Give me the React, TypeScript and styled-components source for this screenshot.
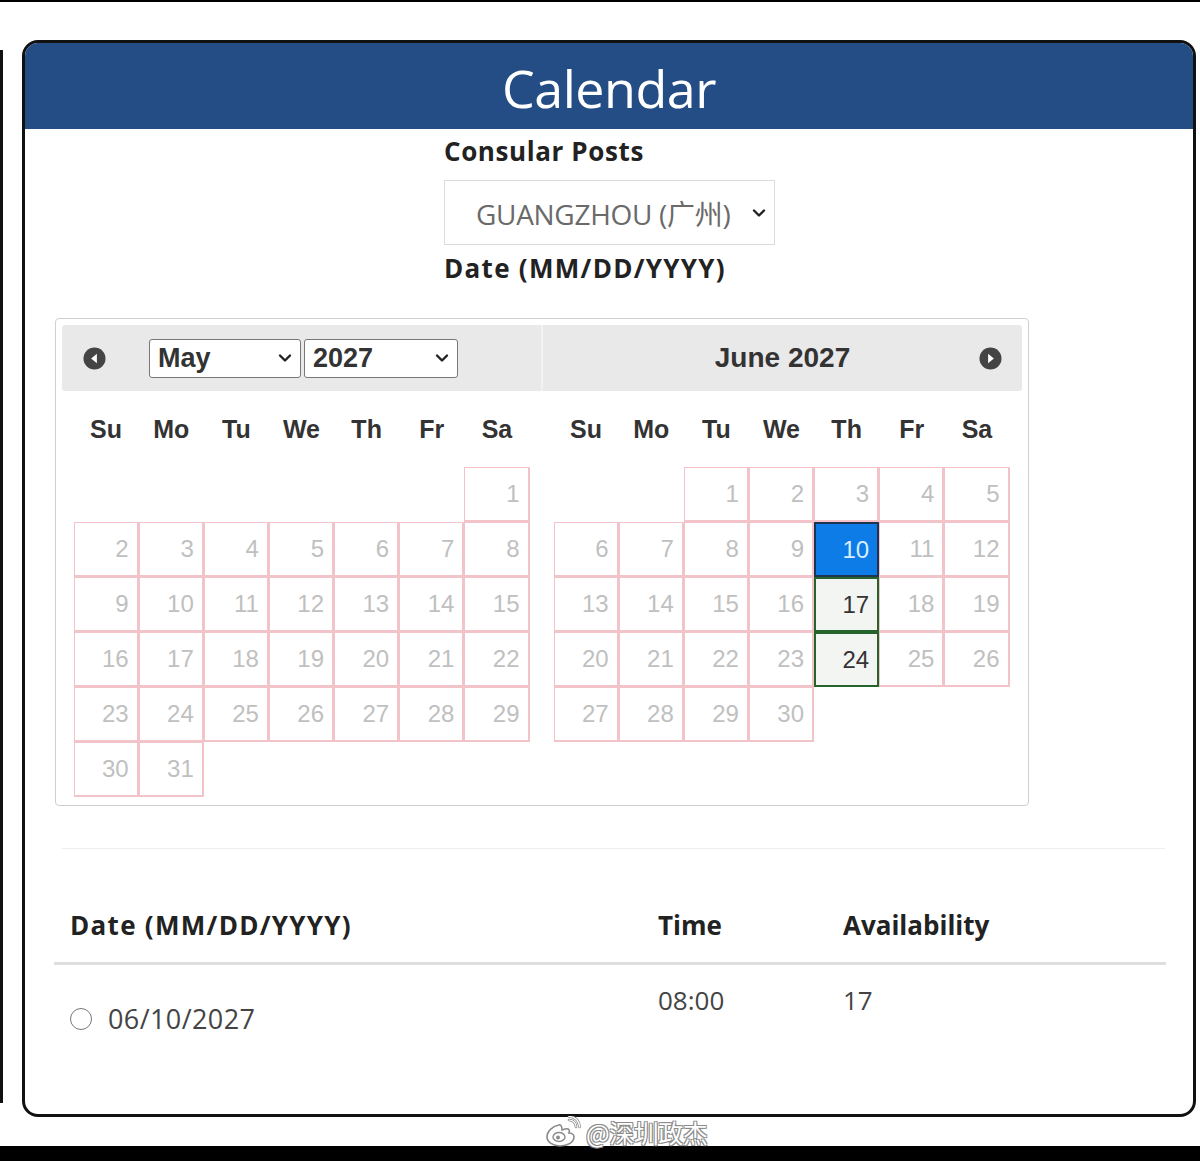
import React from 'react';
import styled, { createGlobalStyle } from 'styled-components';

const GlobalStyle = createGlobalStyle`
  html, body {
    margin: 0;
    padding: 0;
    background: #fff;
  }
  * {
    box-sizing: border-box;
  }
`;

const UI_FONT = `'Open Sans', 'Noto Sans', 'Noto Sans CJK SC', sans-serif`;
const CAL_FONT = `'Liberation Sans', Arial, sans-serif`;

const Page = styled.div`
  position: relative;
  width: 1200px;
  height: 1161px;
  overflow: hidden;
  border-top: 2px solid #000;
  display: flex;
  flex-direction: column;
`;

const Stage = styled.div`
  display: flex;
  align-items: flex-start;
  padding-top: 38px;
`;

const LeftEdge = styled.div`
  width: 3px;
  height: 1053px;
  margin-top: 10px;
  background: #111;
`;

const Card = styled.section`
  width: 1174px;
  height: 1077px;
  margin-left: 19px;
  border: 3px solid #111;
  border-radius: 16px;
  overflow: hidden;
  display: flex;
  flex-direction: column;
  background: #fff;
`;

const CardHeader = styled.header`
  height: 86px;
  background: #234d84;
  display: flex;
  align-items: center;
  justify-content: center;
`;

const Title = styled.h1`
  margin: 0;
  font-family: ${UI_FONT};
  font-size: 52px;
  font-weight: 400;
  color: #fff;
  letter-spacing: -0.5px;
  padding-top: 2px;
`;

const Body = styled.div`
  padding: 7px 0 0 0;
  display: flex;
  flex-direction: column;
`;

const Form = styled.div`
  margin-left: 419px;
  display: flex;
  flex-direction: column;
`;

const Label = styled.div<{ $mt?: number; $ls?: number }>`
  font-family: ${UI_FONT};
  font-size: 26px;
  font-weight: 700;
  line-height: 30px;
  color: #222;
  letter-spacing: ${({ $ls }) => $ls ?? 0}px;
  margin-top: ${({ $mt }) => $mt ?? 0}px;
`;

const PostSelect = styled.div`
  margin-top: 14px;
  width: 331px;
  height: 65px;
  border: 1px solid #dcdcdc;
  display: flex;
  align-items: center;
  justify-content: space-between;
  padding: 0 8px 0 31px;
  font-family: ${UI_FONT};
  font-size: 28px;
  letter-spacing: -0.3px;
  color: #6a6a6a;
`;

const Picker = styled.div`
  margin: 35px 0 0 30px;
  width: 974px;
  height: 488px;
  border: 1px solid #cfcfcf;
  border-radius: 4px;
  padding: 6px;
  display: grid;
  grid-template-columns: 479px 481px;
  align-content: start;
`;

const Month = styled.div`
  display: flex;
  flex-direction: column;
`;

const MonthHeader = styled.div<{ $side: 'left' | 'right' }>`
  height: 66px;
  background: #e9e9e9;
  display: grid;
  align-items: center;
  border-radius: ${({ $side }) => ($side === 'left' ? '3px 0 0 3px' : '0 3px 3px 0')};
  ${({ $side }) =>
    $side === 'left'
      ? `grid-template-columns: auto auto auto 1fr; padding-left: 21px;`
      : `grid-template-columns: 1fr auto 1fr; padding-right: 20px; border-left: 2px solid #f2f2f2;`}
`;

const NavButton = styled.span<{ $end?: boolean }>`
  display: flex;
  justify-self: ${({ $end }) => ($end ? 'end' : 'start')};
  margin-right: ${({ $end }) => ($end ? 0 : 43)}px;
`;

const DropBox = styled.div<{ $w: number; $gap?: number }>`
  width: ${({ $w }) => $w}px;
  height: 39px;
  margin-left: ${({ $gap }) => $gap ?? 0}px;
  border: 1px solid #777;
  border-radius: 3px;
  background: #fff;
  display: flex;
  align-items: center;
  justify-content: space-between;
  padding: 0 8px 0 8px;
  font-family: ${CAL_FONT};
  font-size: 27px;
  font-weight: 700;
  color: #333;
`;

const MonthTitle = styled.div`
  grid-column: 2;
  font-family: ${CAL_FONT};
  font-size: 28px;
  font-weight: 700;
  color: #333;
  padding-left: 20px;
`;

const Grid = styled.div`
  margin: 0 auto;
  width: 456px;
  display: grid;
  grid-template-columns: repeat(7, 1fr);
  grid-template-rows: 76px;
  grid-auto-rows: 55px;
`;

const WeekDay = styled.div`
  display: flex;
  align-items: center;
  justify-content: center;
  font-family: ${CAL_FONT};
  font-size: 25px;
  font-weight: 700;
  color: #333;
`;

type CellKind = 'off' | 'open' | 'picked';

const Cell = styled.div<{ $kind: CellKind }>`
  display: flex;
  align-items: center;
  justify-content: flex-end;
  padding-right: 8px;
  font-family: ${CAL_FONT};
  font-size: 24px;
  border-style: solid;
  ${({ $kind }) =>
    $kind === 'picked'
      ? `background: #0d7ce6; color: #d9eeff; border-width: 2px; border-color: #1d3550;`
      : $kind === 'open'
      ? `background: #f3f5f3; color: #333; border-width: 2px; border-color: #25652b;`
      : `background: #fff; color: #c0c0c0; border-width: 1px 2px 2px 1px; border-color: #f2c3c9;`}
`;

const Blank = styled.div``;

const Divider = styled.hr`
  margin: 42px 0 0 37px;
  width: 1103px;
  border: 0;
  border-top: 1px solid #eee;
`;

const Table = styled.div`
  margin: 0 27px 0 29px;
  display: grid;
  grid-template-columns: 588px 185px 1fr;
`;

const Th = styled.div<{ $ls?: number }>`
  padding: 61px 16px 22px;
  font-family: ${UI_FONT};
  font-size: 26px;
  font-weight: 700;
  line-height: 30px;
  color: #222;
  letter-spacing: ${({ $ls }) => $ls ?? 0}px;
  border-bottom: 3px solid #dedede;
`;

const Td = styled.div<{ $pt: number; $top?: boolean }>`
  padding: ${({ $pt }) => $pt}px 16px 0;
  align-self: ${({ $top }) => ($top ? 'start' : 'stretch')};
  font-family: ${UI_FONT};
  font-size: 26px;
  line-height: 30px;
  color: #444;
  display: flex;
  align-items: center;
  gap: 16px;
`;

const DateText = styled.span`
  font-size: 27px;
  letter-spacing: 0.4px;
`;

const Radio = styled.span`
  width: 22px;
  height: 22px;
  border-radius: 50%;
  border: 1.5px solid #777;
  background: #fff;
`;

const BottomBar = styled.div`
  margin-top: 29px;
  height: 15px;
  background: #000;
`;

const Watermark = styled.div`
  position: absolute;
  left: 545px;
  top: 1113px;
  display: flex;
  align-items: center;
  gap: 5px;
  font-family: 'Noto Sans CJK SC', ${UI_FONT};
  font-size: 25px;
  line-height: 34px;
  color: #fff;
  letter-spacing: -0.5px;
  text-shadow: -1px -1px 0 #8a8a8a, 1px -1px 0 #8a8a8a, -1px 1px 0 #8a8a8a,
    1px 1px 0 #8a8a8a;
`;

const Chevron = ({ size = 14 }: { size?: number }) => (
  <svg width={size} height={size} viewBox="0 0 14 14">
    <path d="M2 4.5 L7 9.5 L12 4.5" fill="none" stroke="#222" strokeWidth="2.4" strokeLinecap="round" strokeLinejoin="round" />
  </svg>
);

const NavIcon = ({ dir }: { dir: 'prev' | 'next' }) => (
  <svg width="23" height="23" viewBox="0 0 24 24">
    <circle cx="12" cy="12" r="11.5" fill="#444" />
    {dir === 'prev' ? (
      <path d="M14.5 7 L8.5 12 L14.5 17 Z" fill="#fff" />
    ) : (
      <path d="M9.5 7 L15.5 12 L9.5 17 Z" fill="#fff" />
    )}
  </svg>
);

const WeiboLogo = () => (
  <svg width="36" height="32" viewBox="0 0 36 32">
    <path
      d="M14 9c-6 1-12 6-12 12 0 5 6 9 13 9 8 0 14-4 14-9 0-3-3-4-5-4 1-3 0-5-4-4l-3 1c0-3-1-6-3-5z"
      fill="#fff"
      stroke="#8a8a8a"
      strokeWidth="1.6"
    />
    <ellipse cx="14" cy="21" rx="6" ry="4.5" fill="#fff" stroke="#8a8a8a" strokeWidth="1.4" />
    <circle cx="13" cy="21.5" r="2" fill="#8a8a8a" />
    <path d="M24 4c4 0 7 3 7 7" fill="none" stroke="#8a8a8a" strokeWidth="2.6" strokeLinecap="round" />
    <path d="M24 4c4 0 7 3 7 7" fill="none" stroke="#fff" strokeWidth="1.2" strokeLinecap="round" />
    <path d="M24 0.5c6 0 10.5 4.5 10.5 10.5" fill="none" stroke="#8a8a8a" strokeWidth="2.6" strokeLinecap="round" />
    <path d="M24 0.5c6 0 10.5 4.5 10.5 10.5" fill="none" stroke="#fff" strokeWidth="1.2" strokeLinecap="round" />
  </svg>
);

const WEEKDAYS = ['Su', 'Mo', 'Tu', 'We', 'Th', 'Fr', 'Sa'];

const monthCells = (offset: number, days: number, picked?: number, open: number[] = []) => {
  const out: React.ReactNode[] = [];
  for (let i = 0; i < offset; i++) out.push(<Blank key={`b${i}`} />);
  for (let d = 1; d <= days; d++) {
    const kind: CellKind = d === picked ? 'picked' : open.includes(d) ? 'open' : 'off';
    out.push(
      <Cell key={d} $kind={kind}>
        {d}
      </Cell>
    );
  }
  return out;
};

export default function App() {
  return (
    <>
      <GlobalStyle />
      <Page>
        <Stage>
          <LeftEdge />
          <Card>
            <CardHeader>
              <Title>Calendar</Title>
            </CardHeader>
            <Body>
              <Form>
                <Label $ls={0.6}>Consular Posts</Label>
                <PostSelect>
                  <span>GUANGZHOU (广州)</span>
                  <Chevron />
                </PostSelect>
                <Label $mt={8} $ls={1.3}>
                  Date (MM/DD/YYYY)
                </Label>
              </Form>

              <Picker>
                <Month>
                  <MonthHeader $side="left">
                    <NavButton>
                      <NavIcon dir="prev" />
                    </NavButton>
                    <DropBox $w={152}>
                      <span>May</span>
                      <Chevron />
                    </DropBox>
                    <DropBox $w={154} $gap={3}>
                      <span>2027</span>
                      <Chevron />
                    </DropBox>
                  </MonthHeader>
                  <Grid>
                    {WEEKDAYS.map((w) => (
                      <WeekDay key={w}>{w}</WeekDay>
                    ))}
                    {monthCells(6, 31)}
                  </Grid>
                </Month>
                <Month>
                  <MonthHeader $side="right">
                    <MonthTitle>June 2027</MonthTitle>
                    <NavButton $end>
                      <NavIcon dir="next" />
                    </NavButton>
                  </MonthHeader>
                  <Grid>
                    {WEEKDAYS.map((w) => (
                      <WeekDay key={w}>{w}</WeekDay>
                    ))}
                    {monthCells(2, 30, 10, [17, 24])}
                  </Grid>
                </Month>
              </Picker>

              <Divider />

              <Table>
                <Th $ls={1.3}>Date (MM/DD/YYYY)</Th>
                <Th>Time</Th>
                <Th>Availability</Th>
                <Td $pt={39}>
                  <Radio />
                  <DateText>06/10/2027</DateText>
                </Td>
                <Td $pt={20} $top>
                  08:00
                </Td>
                <Td $pt={20} $top>
                  17
                </Td>
              </Table>
            </Body>
          </Card>
        </Stage>
        <BottomBar />
        <Watermark>
          <WeiboLogo />
          <span>@深圳政杰</span>
        </Watermark>
      </Page>
    </>
  );
}
